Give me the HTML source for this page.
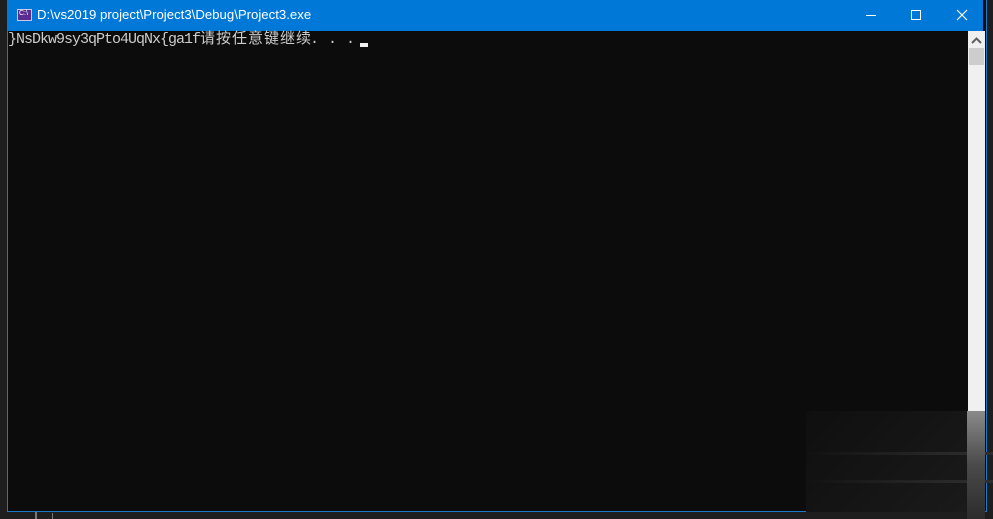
<!DOCTYPE html>
<html><head><meta charset="utf-8"><style>
html,body{margin:0;padding:0;width:993px;height:519px;overflow:hidden;background:#1e1e1e;position:relative}
div{position:absolute;box-sizing:border-box}
.t{font-family:"Liberation Mono","Noto Sans CJK SC",monospace;font-size:15px;color:#cccccc;white-space:pre;line-height:16px}
</style></head><body>
<div style="left:7px;top:0;width:980px;height:512px;background:#0c0c0c;border:1px solid #1c78c8;border-top:none"></div>
<div style="left:7px;top:0;width:976px;height:31px;background:#0078d7"></div>
<div style="left:17px;top:9px;width:15px;height:12px;background:#5b2d90;border:1px solid #c8c8e8"></div>
<div style="left:19px;top:10px;font:7px 'Liberation Sans',sans-serif;color:#fff">C:\</div>
<div style="left:37px;top:7px;font:13.2px 'Liberation Sans',sans-serif;color:#fff;white-space:nowrap">D:\vs2019 project\Project3\Debug\Project3.exe</div>
<div style="left:866px;top:15px;width:10px;height:1px;background:#fff"></div>
<div style="left:911px;top:10px;width:10px;height:10px;border:1px solid #fff"></div>
<svg style="position:absolute;left:956px;top:9px" width="12" height="12"><path d="M1 1L11 11M11 1L1 11" stroke="#fff" stroke-width="1.2"/></svg>
<div style="left:968px;top:31px;width:17px;height:380px;background:#f0f0f0"></div>
<svg style="position:absolute;left:970px;top:36px" width="13" height="9"><path d="M2 7L6.5 2.5L11 7" stroke="#606060" stroke-width="2" fill="none"/></svg>
<div style="left:969px;top:48px;width:15px;height:17px;background:#cdcdcd"></div>
<div style="left:806px;top:411px;width:162px;height:101px;background:linear-gradient(135deg,#0f0f0f,#1a1a1a)"></div>
<div style="left:806px;top:452px;width:187px;height:3px;background:linear-gradient(90deg,rgba(60,60,60,0),#2e2e2e)"></div>
<div style="left:806px;top:480px;width:187px;height:3px;background:linear-gradient(90deg,rgba(60,60,60,0),#2e2e2e)"></div>
<div style="left:967px;top:411px;width:18px;height:108px;background:linear-gradient(#8a8a8a,#4a4a4a 50%,#2c2c2c)"></div>
<div class="t" style="left:8px;top:32px"><span style="letter-spacing:-1px">}NsDkw9sy3qPto4UqNx{ga1f</span><span style="font-size:15px;letter-spacing:1px">请按任意键继续</span></div>
<div class="t" style="left:310px;top:32px">. . .</div>
<div style="left:360px;top:43px;width:8px;height:4px;background:#f0f0f0"></div>
<div style="left:35px;top:512px;width:2px;height:7px;background:#777"></div>
<div style="left:52px;top:513px;width:1px;height:6px;background:#777"></div>
</body></html>
